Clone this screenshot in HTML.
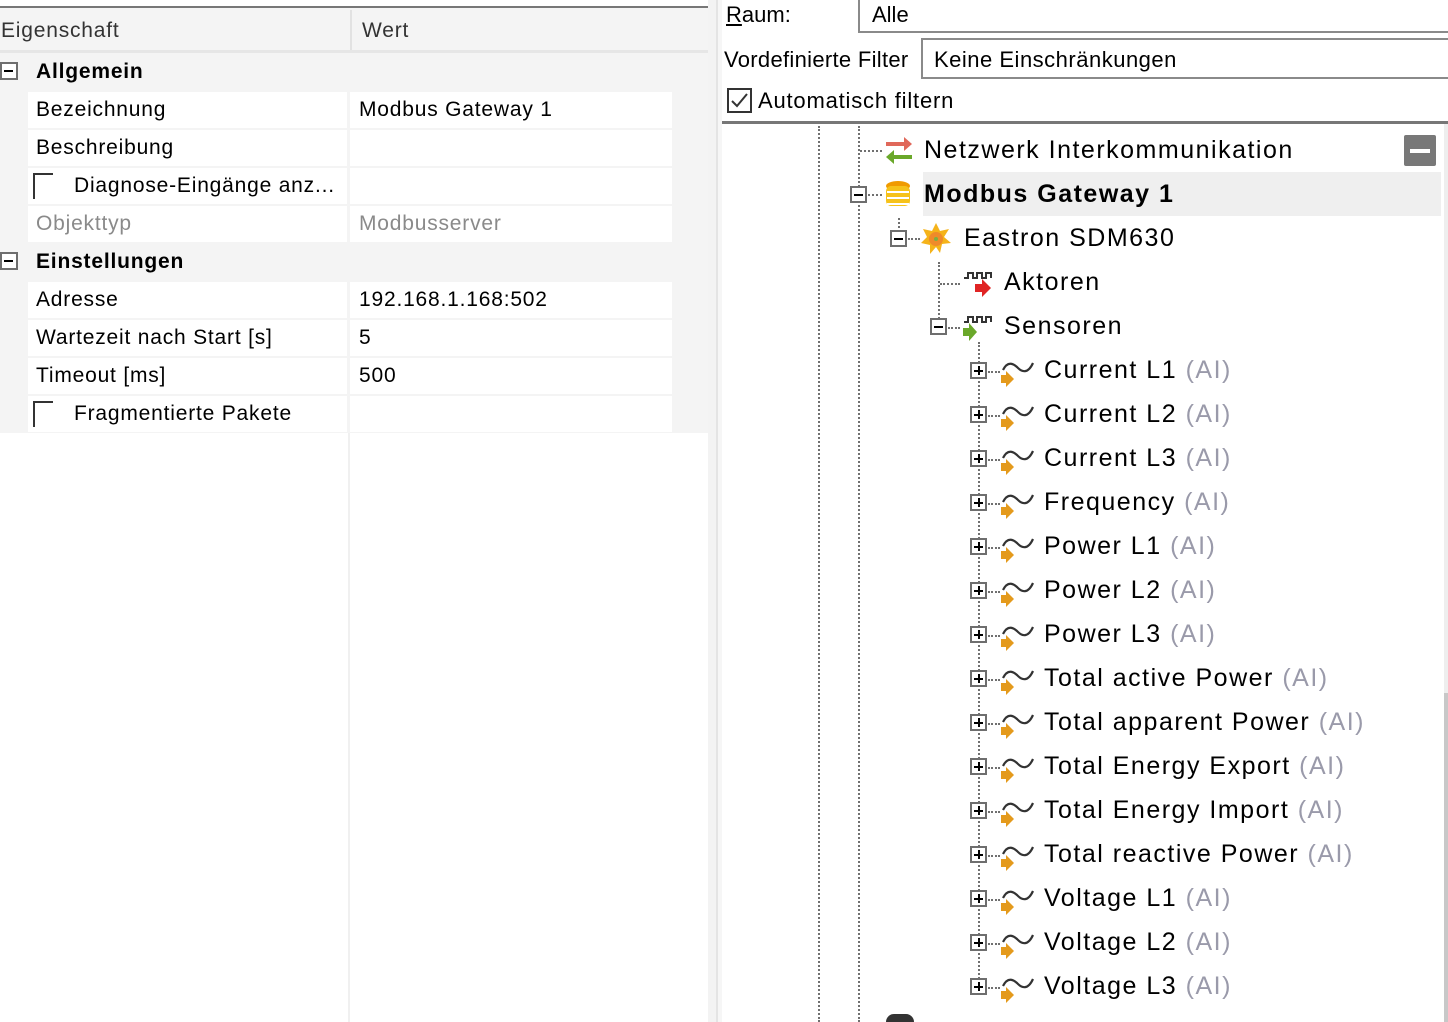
<!DOCTYPE html>
<html><head><meta charset="utf-8">
<style>
*{margin:0;padding:0;box-sizing:border-box}
html,body{width:1448px;height:1022px;overflow:hidden}
body{background:#fff;font-family:"Liberation Sans",sans-serif;color:#000;position:relative}
.a{position:absolute;white-space:nowrap}
.lp{font-size:21px;line-height:38px;letter-spacing:0.8px}
.cell{position:absolute;background:#fff;height:36px}
.tt{font-size:25px;line-height:44px;letter-spacing:1.5px}
.g{color:#9a9aaa}
.exp{position:absolute;width:17px;height:17px;border:2px solid #6e6e6e;background:#fff}
.exp::before{content:"";position:absolute;left:2px;top:5.5px;width:9px;height:2px;background:#000}
.exp.p::after{content:"";position:absolute;left:5.5px;top:2px;width:2px;height:9px;background:#000}
.vd{position:absolute;width:0;border-left:2px dotted #707070}
.hd{position:absolute;height:0;border-top:2px dotted #707070}
.cb{position:absolute;width:20px;height:26px;border-left:2px solid #333;border-top:2px solid #333}
</style></head><body>
<div class="a" style="left:0;top:0;width:708px;height:1022px;background:#fff"></div>
<div class="a" style="left:0;top:6px;width:708px;height:2px;background:#777"></div>
<div class="a" style="left:0;top:8px;width:708px;height:425px;background:#f4f4f4"></div>
<div class="a" style="left:0;top:50px;width:708px;height:3px;background:#e6e6e6"></div>
<div class="a" style="left:350px;top:10px;width:2px;height:40px;background:#e2e2e2"></div>
<div class="a lp" style="left:1px;top:12px;color:#333">Eigenschaft</div>
<div class="a lp" style="left:362px;top:12px;color:#333">Wert</div>
<div class="a" style="left:708px;top:0;width:8px;height:1022px;background:#f3f3f3"></div>
<div class="a" style="left:716px;top:0;width:2px;height:1022px;background:#e4e4e4"></div>
<div class="a" style="left:718px;top:0;width:4px;height:1022px;background:#f6f6f6"></div>
<div class="a" style="left:348px;top:433px;width:2px;height:589px;background:#f0f0f0"></div>

<div class="exp" style="left:0;top:62px;width:18px;height:18px;border-width:2px"></div>
<div class="a lp" style="left:36px;top:53px;font-weight:bold">Allgemein</div>
<div class="cell" style="left:28px;top:92px;width:319px"></div><div class="cell" style="left:350px;top:92px;width:322px"></div>
<div class="cell" style="left:28px;top:130px;width:319px"></div><div class="cell" style="left:350px;top:130px;width:322px"></div>
<div class="cell" style="left:28px;top:168px;width:319px"></div><div class="cell" style="left:350px;top:168px;width:322px"></div>
<div class="cell" style="left:28px;top:206px;width:319px"></div><div class="cell" style="left:350px;top:206px;width:322px"></div>
<div class="a lp" style="left:36px;top:91px">Bezeichnung</div><div class="a lp" style="left:359px;top:91px">Modbus Gateway 1</div>
<div class="a lp" style="left:36px;top:129px">Beschreibung</div>
<div class="cb" style="left:33px;top:173px"></div>
<div class="a lp" style="left:74px;top:167px">Diagnose-Eingänge anz...</div>
<div class="a lp" style="left:36px;top:205px;color:#8a8a8a">Objekttyp</div><div class="a lp" style="left:359px;top:205px;color:#8a8a8a">Modbusserver</div>

<div class="exp" style="left:0;top:252px;width:18px;height:18px"></div>
<div class="a lp" style="left:36px;top:243px;font-weight:bold">Einstellungen</div>
<div class="cell" style="left:28px;top:282px;width:319px"></div><div class="cell" style="left:350px;top:282px;width:322px"></div>
<div class="cell" style="left:28px;top:320px;width:319px"></div><div class="cell" style="left:350px;top:320px;width:322px"></div>
<div class="cell" style="left:28px;top:358px;width:319px"></div><div class="cell" style="left:350px;top:358px;width:322px"></div>
<div class="cell" style="left:28px;top:396px;width:319px"></div><div class="cell" style="left:350px;top:396px;width:322px"></div>
<div class="a lp" style="left:36px;top:281px">Adresse</div><div class="a lp" style="left:359px;top:281px">192.168.1.168:502</div>
<div class="a lp" style="left:36px;top:319px">Wartezeit nach Start [s]</div><div class="a lp" style="left:359px;top:319px">5</div>
<div class="a lp" style="left:36px;top:357px">Timeout [ms]</div><div class="a lp" style="left:359px;top:357px">500</div>
<div class="cb" style="left:33px;top:401px"></div>
<div class="a lp" style="left:74px;top:395px">Fragmentierte Pakete</div>

<div class="a" style="left:726px;top:0;font-size:22px;line-height:30px"><u>R</u>aum:</div>
<div class="a" style="left:858px;top:-4px;width:600px;height:37px;border:2px solid #8a8a8a;border-top:none"></div>
<div class="a" style="left:872px;top:0;font-size:22px;line-height:30px">Alle</div>
<div class="a" style="left:724px;top:45px;font-size:22px;line-height:30px;letter-spacing:0.3px">Vordefinierte Filter</div>
<div class="a" style="left:921px;top:38px;width:540px;height:41px;border:2px solid #8a8a8a;border-right:none"></div>
<div class="a" style="left:934px;top:45px;font-size:22px;line-height:30px;letter-spacing:0.5px">Keine Einschränkungen</div>
<div class="a" style="left:727px;top:88px;width:25px;height:25px;border:2px solid #333"></div>
<svg class="a" style="left:729px;top:90px" width="21" height="21"><path d="M3 11 L8 16 L18 4" stroke="#333" stroke-width="2" fill="none"/></svg>
<div class="a" style="left:758px;top:86px;font-size:22px;line-height:30px;letter-spacing:0.8px">Automatisch filtern</div>
<div class="a" style="left:722px;top:121px;width:726px;height:3px;background:#777"></div>
<div class="a" style="left:1444px;top:124px;width:4px;height:898px;background:#eee"></div>
<div class="a" style="left:1444px;top:693px;width:4px;height:329px;background:#c8c8c8"></div>

<div class="vd" style="left:818px;top:126px;height:896px"></div>
<div class="vd" style="left:858px;top:126px;height:896px"></div>
<div class="hd" style="left:860px;top:150px;width:22px"></div>
<svg class="a" style="left:884px;top:136px" width="30" height="30"><path d="M2 8 H22" stroke="#e0685a" stroke-width="4"/><path d="M20 1 L28 8 L20 15Z" fill="#e0685a"/><path d="M8 21 H28" stroke="#6aa82a" stroke-width="4"/><path d="M10 14 L2 21 L10 28Z" fill="#6aa82a"/></svg>
<div class="a tt" style="left:924px;top:128px">Netzwerk Interkommunikation</div>
<div class="a" style="left:1404px;top:135px;width:32px;height:31px;background:#787878;border-radius:2px"></div>
<div class="a" style="left:1410px;top:149px;width:20px;height:4px;background:#fff"></div>

<div class="a" style="left:923px;top:172px;width:518px;height:44px;background:#efefef"></div>
<div class="exp" style="left:850px;top:186px"></div>
<div class="hd" style="left:868px;top:194px;width:14px"></div>
<svg class="a" style="left:884px;top:180px" width="28" height="30"><ellipse cx="14" cy="6" rx="12" ry="5" fill="#f09a00"/><rect x="2" y="6" width="24" height="20" rx="5" fill="#f6c21a"/><path d="M3 12 H25 M3 18 H25 M3 24 H25" stroke="#fff" stroke-width="2"/></svg>
<div class="a tt" style="left:924px;top:172px;font-weight:bold">Modbus Gateway 1</div>

<div class="vd" style="left:898px;top:218px;height:14px"></div>
<div class="exp" style="left:890px;top:230px"></div>
<div class="hd" style="left:908px;top:238px;width:12px"></div>
<svg class="a" style="left:920px;top:222px" width="32" height="34"><path d="M16 1 L20 9 L29 7 L24 15 L31 21 L22 22 L20 31 L16 25 L10 32 L10 23 L1 21 L7 15 L3 7 L12 9Z" fill="#f5b31a"/><circle cx="16" cy="17" r="7" fill="#ef8a2a"/><circle cx="16" cy="17" r="2" fill="#7bb040"/></svg>
<div class="a tt" style="left:964px;top:216px">Eastron SDM630</div>

<div class="vd" style="left:938px;top:262px;height:64px"></div>
<div class="hd" style="left:940px;top:283px;width:20px"></div>
<svg class="a" style="left:962px;top:272px" width="32" height="28"><path d="M2 6 H6 V1 H11 V6 H15 V1 H20 V6 H24 V1 H29 V6" stroke="#333" stroke-width="2" fill="none"/><path d="M13 12 H20 V7 L29 16 L20 25 V20 H13Z" fill="#e02424"/></svg>
<div class="a tt" style="left:1004px;top:260px">Aktoren</div>

<div class="exp" style="left:930px;top:318px"></div>
<div class="hd" style="left:948px;top:327px;width:12px"></div>
<svg class="a" style="left:962px;top:316px" width="32" height="28"><path d="M2 6 H6 V1 H11 V6 H15 V1 H20 V6 H24 V1 H29 V6" stroke="#333" stroke-width="2" fill="none"/><path d="M1 12 H7 V7 L15 16 L7 25 V20 H1Z" fill="#6aa82a"/></svg>
<div class="a tt" style="left:1004px;top:304px">Sensoren</div>

<div class="vd" style="left:978px;top:342px;height:644px"></div>

<div class="exp p" style="left:970px;top:362px"></div><div class="hd" style="left:988px;top:371px;width:12px"></div>
<svg class="a" style="left:1000px;top:360px" width="36" height="28"><path d="M3 10 C8 0 14 4 18 8 C22 12 28 14 33 3" stroke="#333" stroke-width="2.2" fill="none"/><path d="M1 15 H6 V11 L14 19 L6 27 V23 H1Z" fill="#e49a1c"/></svg>
<div class="a tt" style="left:1044px;top:348px">Current L1 <span class="g">(AI)</span></div>

<div class="exp p" style="left:970px;top:406px"></div><div class="hd" style="left:988px;top:415px;width:12px"></div>
<svg class="a" style="left:1000px;top:404px" width="36" height="28"><path d="M3 10 C8 0 14 4 18 8 C22 12 28 14 33 3" stroke="#333" stroke-width="2.2" fill="none"/><path d="M1 15 H6 V11 L14 19 L6 27 V23 H1Z" fill="#e49a1c"/></svg>
<div class="a tt" style="left:1044px;top:392px">Current L2 <span class="g">(AI)</span></div>

<div class="exp p" style="left:970px;top:450px"></div><div class="hd" style="left:988px;top:459px;width:12px"></div>
<svg class="a" style="left:1000px;top:448px" width="36" height="28"><path d="M3 10 C8 0 14 4 18 8 C22 12 28 14 33 3" stroke="#333" stroke-width="2.2" fill="none"/><path d="M1 15 H6 V11 L14 19 L6 27 V23 H1Z" fill="#e49a1c"/></svg>
<div class="a tt" style="left:1044px;top:436px">Current L3 <span class="g">(AI)</span></div>

<div class="exp p" style="left:970px;top:494px"></div><div class="hd" style="left:988px;top:503px;width:12px"></div>
<svg class="a" style="left:1000px;top:492px" width="36" height="28"><path d="M3 10 C8 0 14 4 18 8 C22 12 28 14 33 3" stroke="#333" stroke-width="2.2" fill="none"/><path d="M1 15 H6 V11 L14 19 L6 27 V23 H1Z" fill="#e49a1c"/></svg>
<div class="a tt" style="left:1044px;top:480px">Frequency <span class="g">(AI)</span></div>

<div class="exp p" style="left:970px;top:538px"></div><div class="hd" style="left:988px;top:547px;width:12px"></div>
<svg class="a" style="left:1000px;top:536px" width="36" height="28"><path d="M3 10 C8 0 14 4 18 8 C22 12 28 14 33 3" stroke="#333" stroke-width="2.2" fill="none"/><path d="M1 15 H6 V11 L14 19 L6 27 V23 H1Z" fill="#e49a1c"/></svg>
<div class="a tt" style="left:1044px;top:524px">Power L1 <span class="g">(AI)</span></div>

<div class="exp p" style="left:970px;top:582px"></div><div class="hd" style="left:988px;top:591px;width:12px"></div>
<svg class="a" style="left:1000px;top:580px" width="36" height="28"><path d="M3 10 C8 0 14 4 18 8 C22 12 28 14 33 3" stroke="#333" stroke-width="2.2" fill="none"/><path d="M1 15 H6 V11 L14 19 L6 27 V23 H1Z" fill="#e49a1c"/></svg>
<div class="a tt" style="left:1044px;top:568px">Power L2 <span class="g">(AI)</span></div>

<div class="exp p" style="left:970px;top:626px"></div><div class="hd" style="left:988px;top:635px;width:12px"></div>
<svg class="a" style="left:1000px;top:624px" width="36" height="28"><path d="M3 10 C8 0 14 4 18 8 C22 12 28 14 33 3" stroke="#333" stroke-width="2.2" fill="none"/><path d="M1 15 H6 V11 L14 19 L6 27 V23 H1Z" fill="#e49a1c"/></svg>
<div class="a tt" style="left:1044px;top:612px">Power L3 <span class="g">(AI)</span></div>

<div class="exp p" style="left:970px;top:670px"></div><div class="hd" style="left:988px;top:679px;width:12px"></div>
<svg class="a" style="left:1000px;top:668px" width="36" height="28"><path d="M3 10 C8 0 14 4 18 8 C22 12 28 14 33 3" stroke="#333" stroke-width="2.2" fill="none"/><path d="M1 15 H6 V11 L14 19 L6 27 V23 H1Z" fill="#e49a1c"/></svg>
<div class="a tt" style="left:1044px;top:656px">Total active Power <span class="g">(AI)</span></div>

<div class="exp p" style="left:970px;top:714px"></div><div class="hd" style="left:988px;top:723px;width:12px"></div>
<svg class="a" style="left:1000px;top:712px" width="36" height="28"><path d="M3 10 C8 0 14 4 18 8 C22 12 28 14 33 3" stroke="#333" stroke-width="2.2" fill="none"/><path d="M1 15 H6 V11 L14 19 L6 27 V23 H1Z" fill="#e49a1c"/></svg>
<div class="a tt" style="left:1044px;top:700px">Total apparent Power <span class="g">(AI)</span></div>

<div class="exp p" style="left:970px;top:758px"></div><div class="hd" style="left:988px;top:767px;width:12px"></div>
<svg class="a" style="left:1000px;top:756px" width="36" height="28"><path d="M3 10 C8 0 14 4 18 8 C22 12 28 14 33 3" stroke="#333" stroke-width="2.2" fill="none"/><path d="M1 15 H6 V11 L14 19 L6 27 V23 H1Z" fill="#e49a1c"/></svg>
<div class="a tt" style="left:1044px;top:744px">Total Energy Export <span class="g">(AI)</span></div>

<div class="exp p" style="left:970px;top:802px"></div><div class="hd" style="left:988px;top:811px;width:12px"></div>
<svg class="a" style="left:1000px;top:800px" width="36" height="28"><path d="M3 10 C8 0 14 4 18 8 C22 12 28 14 33 3" stroke="#333" stroke-width="2.2" fill="none"/><path d="M1 15 H6 V11 L14 19 L6 27 V23 H1Z" fill="#e49a1c"/></svg>
<div class="a tt" style="left:1044px;top:788px">Total Energy Import <span class="g">(AI)</span></div>

<div class="exp p" style="left:970px;top:846px"></div><div class="hd" style="left:988px;top:855px;width:12px"></div>
<svg class="a" style="left:1000px;top:844px" width="36" height="28"><path d="M3 10 C8 0 14 4 18 8 C22 12 28 14 33 3" stroke="#333" stroke-width="2.2" fill="none"/><path d="M1 15 H6 V11 L14 19 L6 27 V23 H1Z" fill="#e49a1c"/></svg>
<div class="a tt" style="left:1044px;top:832px">Total reactive Power <span class="g">(AI)</span></div>

<div class="exp p" style="left:970px;top:890px"></div><div class="hd" style="left:988px;top:899px;width:12px"></div>
<svg class="a" style="left:1000px;top:888px" width="36" height="28"><path d="M3 10 C8 0 14 4 18 8 C22 12 28 14 33 3" stroke="#333" stroke-width="2.2" fill="none"/><path d="M1 15 H6 V11 L14 19 L6 27 V23 H1Z" fill="#e49a1c"/></svg>
<div class="a tt" style="left:1044px;top:876px">Voltage L1 <span class="g">(AI)</span></div>

<div class="exp p" style="left:970px;top:934px"></div><div class="hd" style="left:988px;top:943px;width:12px"></div>
<svg class="a" style="left:1000px;top:932px" width="36" height="28"><path d="M3 10 C8 0 14 4 18 8 C22 12 28 14 33 3" stroke="#333" stroke-width="2.2" fill="none"/><path d="M1 15 H6 V11 L14 19 L6 27 V23 H1Z" fill="#e49a1c"/></svg>
<div class="a tt" style="left:1044px;top:920px">Voltage L2 <span class="g">(AI)</span></div>

<div class="exp p" style="left:970px;top:978px"></div><div class="hd" style="left:988px;top:987px;width:12px"></div>
<svg class="a" style="left:1000px;top:976px" width="36" height="28"><path d="M3 10 C8 0 14 4 18 8 C22 12 28 14 33 3" stroke="#333" stroke-width="2.2" fill="none"/><path d="M1 15 H6 V11 L14 19 L6 27 V23 H1Z" fill="#e49a1c"/></svg>
<div class="a tt" style="left:1044px;top:964px">Voltage L3 <span class="g">(AI)</span></div>

<div class="a" style="left:886px;top:1014px;width:28px;height:8px;border-radius:14px 14px 0 0;background:#333"></div>
</body></html>
